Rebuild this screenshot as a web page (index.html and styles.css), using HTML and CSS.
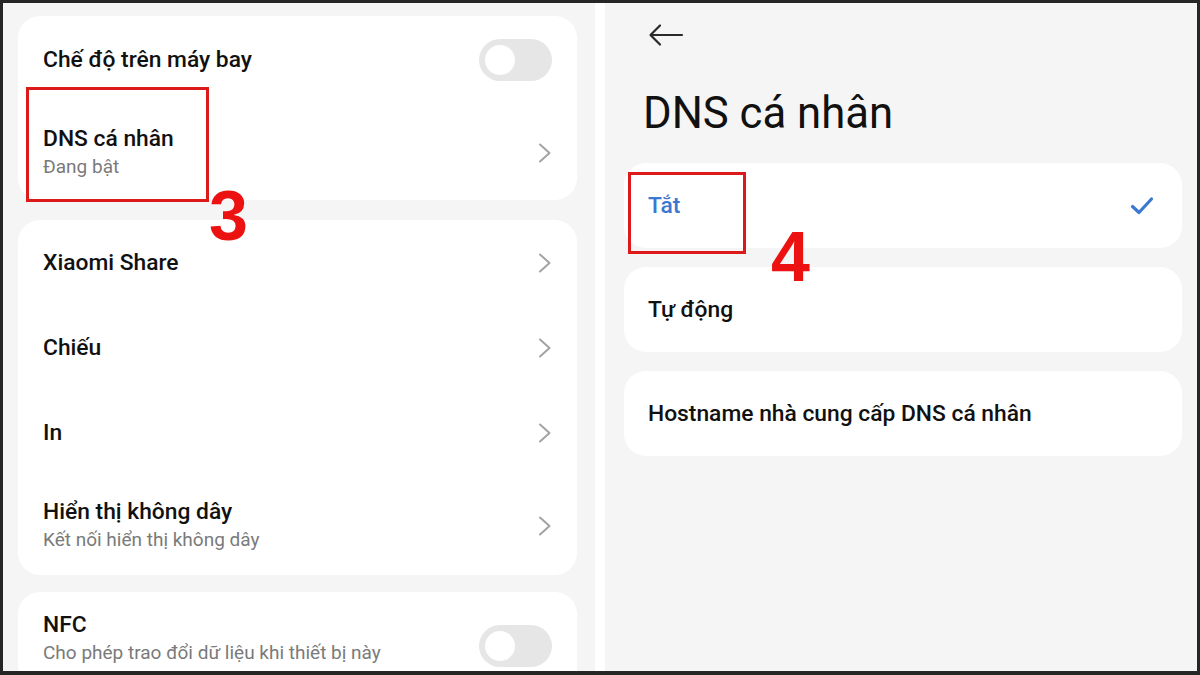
FILE: index.html
```html
<!DOCTYPE html>
<html lang="vi">
<head>
<meta charset="utf-8">
<link rel="stylesheet" href="styles.css">
</head>
<body>
<div class="frame">
  <section class="panel left">
    <div class="card">
      <div class="row r-air">
        <div class="txt"><div class="title">Chế độ trên máy bay</div></div>
        <div class="toggle"><span class="knob"></span></div>
      </div>
      <div class="row r-dns">
        <div class="txt"><div class="title">DNS cá nhân</div><div class="sub">Đang bật</div></div>
        <svg class="chev" width="14" height="20" viewBox="0 0 14 20"><path d="M2 1.5 L11.5 10 L2 18.5" fill="none" stroke="#a3a3a3" stroke-width="2" stroke-linecap="round" stroke-linejoin="round"/></svg>
      </div>
    </div>
    <div class="card c2">
      <div class="row r85">
        <div class="txt"><div class="title">Xiaomi Share</div></div>
        <svg class="chev" width="14" height="20" viewBox="0 0 14 20"><path d="M2 1.5 L11.5 10 L2 18.5" fill="none" stroke="#a3a3a3" stroke-width="2" stroke-linecap="round" stroke-linejoin="round"/></svg>
      </div>
      <div class="row r85">
        <div class="txt"><div class="title">Chiếu</div></div>
        <svg class="chev" width="14" height="20" viewBox="0 0 14 20"><path d="M2 1.5 L11.5 10 L2 18.5" fill="none" stroke="#a3a3a3" stroke-width="2" stroke-linecap="round" stroke-linejoin="round"/></svg>
      </div>
      <div class="row r85">
        <div class="txt"><div class="title">In</div></div>
        <svg class="chev" width="14" height="20" viewBox="0 0 14 20"><path d="M2 1.5 L11.5 10 L2 18.5" fill="none" stroke="#a3a3a3" stroke-width="2" stroke-linecap="round" stroke-linejoin="round"/></svg>
      </div>
      <div class="row r-disp">
        <div class="txt"><div class="title">Hiển thị không dây</div><div class="sub">Kết nối hiển thị không dây</div></div>
        <svg class="chev" width="14" height="20" viewBox="0 0 14 20"><path d="M2 1.5 L11.5 10 L2 18.5" fill="none" stroke="#a3a3a3" stroke-width="2" stroke-linecap="round" stroke-linejoin="round"/></svg>
      </div>
    </div>
    <div class="card c3">
      <div class="row r-nfc">
        <div class="txt"><div class="title">NFC</div><div class="sub">Cho phép trao đổi dữ liệu khi thiết bị này<br>chạm vào thiết bị khác</div></div>
        <div class="toggle"><span class="knob"></span></div>
      </div>
    </div>
    <div class="mark box1"></div>
    <div class="num n3">3</div>
  </section>
  <div class="gap"></div>
  <section class="panel right">
    <svg class="back" width="36" height="24" viewBox="0 0 36 24"><path d="M34 12 H3 M12 2.5 L2.5 12 L12 21.5" fill="none" stroke="#2a2a2a" stroke-width="2.2" stroke-linecap="round" stroke-linejoin="round"/></svg>
    <h1 class="head">DNS cá nhân</h1>
    <div class="opt">
      <span class="otxt sel">Tắt</span>
      <svg class="check" width="24" height="20" viewBox="0 0 24 20"><path d="M2.5 10.5 L9 16.5 L21.5 3" fill="none" stroke="#3a78d2" stroke-width="3.2" stroke-linecap="round" stroke-linejoin="round"/></svg>
    </div>
    <div class="opt"><span class="otxt">Tự động</span></div>
    <div class="opt"><span class="otxt">Hostname nhà cung cấp DNS cá nhân</span></div>
    <div class="mark box2"></div>
    <div class="num n4">4</div>
  </section>
</div>
</body>
</html>
```
FILE: styles.css
```css
* { box-sizing: border-box; }
html, body { margin: 0; padding: 0; }
body {
  width: 1200px;
  height: 675px;
  overflow: hidden;
  font-family: Roboto, "Noto Sans", sans-serif;
  background: #262626;
}
.frame {
  width: 1200px;
  height: 675px;
  border-style: solid;
  border-color: #262626;
  border-width: 3px 3px 4px 3px;
  display: flex;
  overflow: hidden;
}
.panel {
  position: relative;
  width: 592px;
  height: 668px;
  background: #f5f5f5;
  overflow: hidden;
}
.gap { width: 10px; background: #ffffff; }
.left { padding: 13px 0 0 15px; }
.card {
  width: 559px;
  background: #ffffff;
  border-radius: 22px;
}
.c2 { margin-top: 20px; }
.c3 { margin-top: 17px; height: 120px; }
.row {
  display: flex;
  align-items: center;
  justify-content: space-between;
  padding: 0 25px 0 25px;
}
.r-air { height: 86px; padding-top: 1px; }
.r-dns { height: 98px; padding-top: 4px; }
.r85 { height: 85px; }
.r-disp { height: 100px; padding-top: 2px; }
.r-nfc { align-items: flex-start; padding-top: 19px; }
.r-nfc .toggle { margin-top: 14px; }
.title {
  font-size: 22.8px;
  font-weight: 500;
  color: #111111;
  line-height: 28px;
}
.sub {
  font-size: 19px;
  color: #7a7a7a;
  line-height: 28px;
}
.chev { margin-right: 0; display: block; }
.toggle {
  width: 73px;
  height: 42px;
  border-radius: 21px;
  background: #e6e6e6;
  position: relative;
  flex: none;
}
.knob {
  position: absolute;
  left: 6px;
  top: 6px;
  width: 30px;
  height: 30px;
  border-radius: 50%;
  background: #ffffff;
}
.right { padding: 20px 15px 0 19px; }
.back { display: block; margin-left: 24px; }
.head {
  margin: 40px 0 24px 19px;
  font-size: 43.7px;
  font-weight: 400;
  color: #111111;
  line-height: 52px;
}
.opt {
  width: 558px;
  height: 85px;
  background: #ffffff;
  border-radius: 22px;
  display: flex;
  align-items: center;
  justify-content: space-between;
  padding: 0 28px 0 24px;
  margin-bottom: 19px;
}
.otxt {
  font-size: 22.8px;
  font-weight: 500;
  color: #111111;
}
.otxt.sel { color: #3a78d2; }
.mark {
  position: absolute;
  border: 3px solid #dd1a1a;
}
.box1 { left: 23px; top: 84px; width: 183px; height: 115px; }
.box2 { left: 23px; top: 169px; width: 118px; height: 82px; }
.num {
  position: absolute;
  font-family: "Liberation Sans", Arial, sans-serif;
  font-weight: 700;
  font-size: 70px;
  line-height: 70px;
  color: #ec1212;
}
.n3 { left: 206px; top: 178px; }
.n4 { left: 166px; top: 219px; }
```
